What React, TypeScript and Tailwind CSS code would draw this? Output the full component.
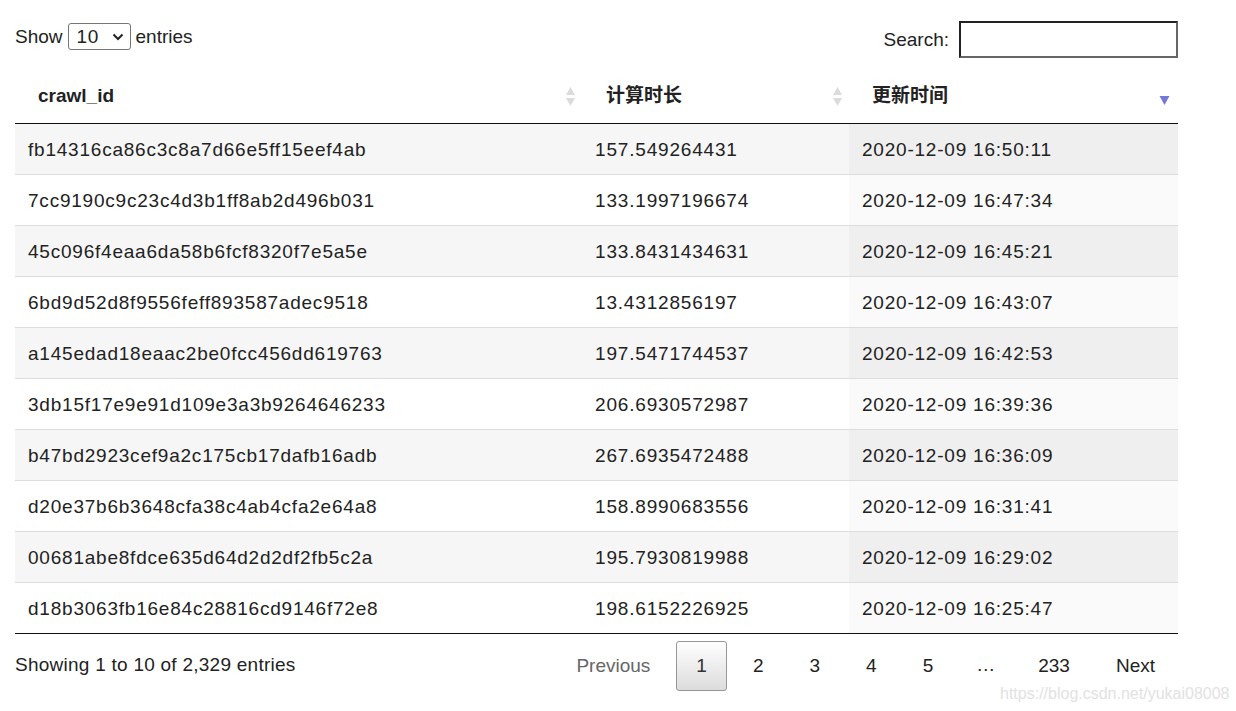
import React from 'react';

type Row = { id: string; dur: string; time: string };

const rows: Row[] = [
  { id: 'fb14316ca86c3c8a7d66e5ff15eef4ab', dur: '157.549264431', time: '2020-12-09 16:50:11' },
  { id: '7cc9190c9c23c4d3b1ff8ab2d496b031', dur: '133.1997196674', time: '2020-12-09 16:47:34' },
  { id: '45c096f4eaa6da58b6fcf8320f7e5a5e', dur: '133.8431434631', time: '2020-12-09 16:45:21' },
  { id: '6bd9d52d8f9556feff893587adec9518', dur: '13.4312856197', time: '2020-12-09 16:43:07' },
  { id: 'a145edad18eaac2be0fcc456dd619763', dur: '197.5471744537', time: '2020-12-09 16:42:53' },
  { id: '3db15f17e9e91d109e3a3b9264646233', dur: '206.6930572987', time: '2020-12-09 16:39:36' },
  { id: 'b47bd2923cef9a2c175cb17dafb16adb', dur: '267.6935472488', time: '2020-12-09 16:36:09' },
  { id: 'd20e37b6b3648cfa38c4ab4cfa2e64a8', dur: '158.8990683556', time: '2020-12-09 16:31:41' },
  { id: '00681abe8fdce635d64d2d2df2fb5c2a', dur: '195.7930819988', time: '2020-12-09 16:29:02' },
  { id: 'd18b3063fb16e84c28816cd9146f72e8', dur: '198.6152226925', time: '2020-12-09 16:25:47' },
];

const SortBoth = () => (
  <svg width="11" height="19" viewBox="0 0 11 19" className="absolute right-[6px] top-[17px]">
    <path d="M5.5 0 L10 8 L1 8 Z" fill="#dcdcdc" />
    <path d="M5.5 19 L10 11 L1 11 Z" fill="#dcdcdc" />
  </svg>
);

const SortDesc = () => (
  <svg width="11" height="9" viewBox="0 0 11 9" className="absolute right-[8px] top-[26px]">
    <path d="M0.5 0 L10.5 0 L5.5 9 Z" fill="#7479d9" />
  </svg>
);

const PageButton: React.FC<{ label: string; current?: boolean; disabled?: boolean }> = ({ label, current, disabled }) => (
  <span
    className={`px-[19px] py-[13px] leading-[22px] rounded-[3px] border ${
      current
        ? 'border-[#979797] bg-gradient-to-b from-white to-[#dcdcdc] text-[#333]'
        : 'border-transparent'
    } ${disabled ? 'text-[#666]' : 'text-[#222]'}`}
  >
    {label}
  </span>
);

const App: React.FC = () => {
  return (
    <div
      className="relative min-h-screen bg-white text-[#222] text-[19px]"
      style={{ fontFamily: '"Liberation Sans", Arial, "Noto Sans CJK SC", sans-serif' }}
    >
      <div className="ml-[15px] w-[1163px] pt-[21px]">
        {/* Top controls */}
        <div className="flex justify-between items-start h-[49px]">
          <div className="flex items-center gap-[5px] leading-[29px] pt-[1px]">
            <span>Show</span>
            <div className="flex items-center justify-between w-[63px] h-[27px] border border-[#767676] rounded-[3px] pl-[8px] pr-[6px]">
              <span className="tracking-[0.6px]">10</span>
              <svg width="12" height="8" viewBox="0 0 12 8">
                <path d="M1.5 1.5 L6 6 L10.5 1.5" fill="none" stroke="#222" strokeWidth="2" />
              </svg>
            </div>
            <span>entries</span>
          </div>
          <div className="flex items-center gap-[10px]">
            <span className="pt-[2px]">Search:</span>
            <div className="w-[219px] h-[37px] border-2 border-t-[#222] border-l-[#222] border-b-[#666] border-r-[#666]" />
          </div>
        </div>

        {/* Table */}
        <table className="w-full border-collapse table-fixed">
          <colgroup>
            <col className="w-[567px]" />
            <col className="w-[267px]" />
            <col className="w-[329px]" />
          </colgroup>
          <thead>
            <tr className="h-[53px] border-b border-[#111]">
              <th className="relative text-left font-bold pl-[23px]">
                crawl_id
                <SortBoth />
              </th>
              <th className="relative text-left font-bold pl-[24px]">
                计算时长
                <SortBoth />
              </th>
              <th className="relative text-left font-bold pl-[23px]">
                更新时间
                <SortDesc />
              </th>
            </tr>
          </thead>
          <tbody className="border-b border-[#111]">
            {rows.map((r, i) => {
              const odd = i % 2 === 0;
              return (
                <tr
                  key={r.id}
                  className={`h-[51px] ${i > 0 ? 'border-t border-[#dddddd]' : ''} ${odd ? 'bg-[#f6f6f6]' : 'bg-white'}`}
                >
                  <td className="pl-[13px] pt-[3px] whitespace-nowrap tracking-[0.78px]">{r.id}</td>
                  <td className="pl-[13px] pt-[3px] whitespace-nowrap tracking-[0.82px]">{r.dur}</td>
                  <td className={`pl-[13px] pt-[3px] whitespace-nowrap tracking-[0.78px] ${odd ? 'bg-[#efefef]' : 'bg-[#fafafa]'}`}>{r.time}</td>
                </tr>
              );
            })}
          </tbody>
        </table>

        {/* Footer */}
        <div className="flex justify-between items-center mt-[7px]">
          <div className="tracking-[0.25px]">Showing 1 to 10 of 2,329 entries</div>
          <div className="flex items-center gap-[6px] mr-[3px]">
            <PageButton label="Previous" disabled />
            <PageButton label="1" current />
            <PageButton label="2" />
            <PageButton label="3" />
            <PageButton label="4" />
            <PageButton label="5" />
            <span className="px-[17px]">…</span>
            <PageButton label="233" />
            <PageButton label="Next" />
          </div>
        </div>
      </div>

      <div className="absolute left-[1000px] top-[682px] text-[16px] text-[#e2e2e2]">
        https://blog.csdn.net/yukai08008
      </div>
    </div>
  );
};

export default App;
